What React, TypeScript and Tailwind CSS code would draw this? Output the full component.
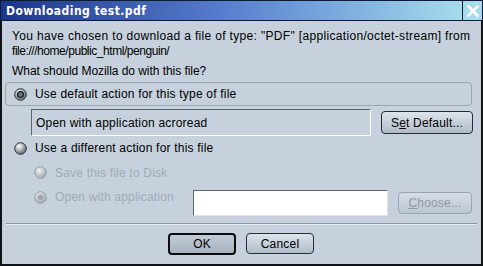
import React from "react";

function Radio({ selected = false, disabled = false }: { selected?: boolean; disabled?: boolean }) {
  const id = `rg-${selected ? "s" : "u"}-${disabled ? "d" : "e"}`;
  return (
    <svg width="13" height="13" viewBox="0 0 13 13" className="shrink-0">
      <defs>
        <radialGradient id={id} cx="38%" cy="32%" r="70%">
          <stop offset="0" stopColor={disabled ? "#f2f4f6" : "#ffffff"} />
          <stop offset="1" stopColor={disabled ? "#9ea6ae" : "#5e6770"} />
        </radialGradient>
      </defs>
      <circle cx="6.5" cy="6.5" r="5.8" fill={`url(#${id})`} stroke={disabled ? "#98a0a8" : "#2e343a"} strokeWidth="1" />
      {selected && (
        <>
          <circle cx="6.5" cy="6.5" r="3.6" fill={disabled ? "#b9c0c7" : "#202428"} />
          <circle cx="6.5" cy="6.5" r="2.2" fill={disabled ? "#98a0a8" : "#6b747d"} />
        </>
      )}
    </svg>
  );
}

export default function App() {
  return (
    <div className="w-[483px] h-[266px] flex flex-col bg-[#c6d1dd] font-['Liberation_Sans',Arial,sans-serif] text-[12px] tracking-[0.2px] text-black overflow-hidden">
      {/* Title bar */}
      <div className="h-[21px] flex border border-[#0e1a3a] shrink-0">
        <div className="flex-1 flex items-center bg-gradient-to-r from-[#1b368a] via-[#5b80cf] to-[#a4dcec]">
          <span className="ml-[5px] text-white font-bold text-[12px] tracking-[0.45px] font-['DejaVu_Sans_Condensed','DejaVu_Sans',sans-serif] leading-none">
            Downloading test.pdf
          </span>
        </div>
        <div className="w-[20px] flex items-center justify-center bg-[#a6dcec] border-l border-[#0e1a3a]">
          <svg width="12" height="12" viewBox="0 0 12 12">
            <path d="M1.5 1.5 L10.5 10.5 M10.5 1.5 L1.5 10.5" stroke="#ffffff" strokeWidth="2.6" strokeLinecap="square" />
          </svg>
        </div>
      </div>

      {/* Body */}
      <div className="flex-1 flex flex-col border-l-2 border-r-2 border-b-2 border-[#101418]">
        <div className="ml-[10px] mt-[8px] leading-[15px]">
          <div className="tracking-[0.33px]">You have chosen to download a file of type: "PDF" [application/octet-stream] from</div>
          <div className="tracking-[-0.45px]">file:///home/public_html/penguin/</div>
        </div>
        <div className="ml-[10px] mt-[5px] leading-[15px] tracking-[-0.05px]">What should Mozilla do with this file?</div>

        {/* Group 1 */}
        <div className="ml-[3px] mt-[3px] w-[467px] h-[24px] rounded-[4px] border border-[#9aa5b0] flex items-center pl-[8px] gap-[8px]">
          <Radio selected />
          <span>Use default action for this type of file</span>
        </div>

        {/* Default app row */}
        <div className="flex items-center mt-[3px]">
          <div className="ml-[29px] w-[340px] h-[27px] flex items-center pl-[4px] border-t border-l border-[#5c6570] border-b border-r border-b-white border-r-white">
            Open with application acroread
          </div>
          <button className="ml-[10px] w-[92px] h-[23px] rounded-[4px] border border-[#262c33] bg-gradient-to-b from-[#dde4ec] to-[#b1bcc8] flex items-center justify-center">
            <span>
              S<span className="underline">e</span>t Default...
            </span>
          </button>
        </div>

        {/* Group 2 */}
        <div className="ml-[3px] mt-0 w-[467px] h-[24px] flex items-center pl-[9px] gap-[8px]">
          <Radio />
          <span>Use a different action for this file</span>
        </div>

        <div className="ml-[3px] w-[467px] h-[25px] flex items-center pl-[29px] gap-[8px] text-[#a2abb4]">
          <Radio disabled />
          <span>Save this file to Disk</span>
        </div>

        <div className="flex items-start mt-[5px]">
          <div className="ml-[32px] h-[14px] flex items-center gap-[8px] text-[#a2abb4] w-[159px]">
            <Radio disabled selected />
            <span>Open with application</span>
          </div>
          <div className="w-[195px] h-[26px] bg-white border-t border-l border-[#5c6570] border-b border-r border-b-[#dfe5eb] border-r-[#dfe5eb]" />
          <button className="ml-[10px] mt-[2px] w-[74px] h-[22px] rounded-[4px] border border-[#9aa4ae] bg-gradient-to-b from-[#d6dde5] to-[#bcc6d1] flex items-center justify-center text-[#8f99a3]">
            <span>
              <span className="underline">C</span>hoose...
            </span>
          </button>
        </div>

        {/* Separator */}
        <div className="mt-[7px] ml-[4px] w-[471px] h-[2px] border-t border-[#8a949e] border-b border-b-[#e6ebf0]" />

        {/* Buttons */}
        <div className="mt-[8px] flex ml-[166px] gap-[10px]">
          <button className="w-[68px] h-[22px] rounded-[4px] border-2 border-[#0a0c0e] bg-gradient-to-b from-[#c3cdd8] to-[#a6b2be] flex items-center justify-center">
            OK
          </button>
          <button className="w-[68px] h-[21px] rounded-[4px] border border-[#262c33] bg-gradient-to-b from-[#dde4ec] to-[#b1bcc8] flex items-center justify-center">
            Cancel
          </button>
        </div>
      </div>
    </div>
  );
}
